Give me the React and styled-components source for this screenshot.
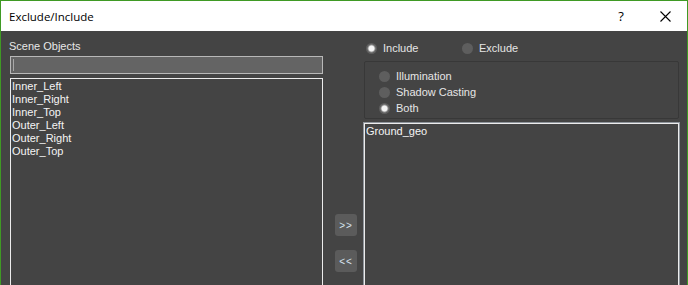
import React from "react";
import styled, { createGlobalStyle } from "styled-components";

const Global = createGlobalStyle`
  html, body { margin: 0; padding: 0; background: #444444; }
  body { font-family: "Liberation Sans", Arial, sans-serif; }
  * { box-sizing: border-box; }
`;

const Window = styled.div`
  width: 688px;
  height: 285px;
  border: 1px solid #3f9a24;
  border-bottom: none;
  background: #444444;
  display: flex;
  flex-direction: column;
  overflow: hidden;
`;

const TitleBar = styled.div`
  height: 30px;
  flex: none;
  background: #ffffff;
  display: flex;
  align-items: center;
  padding-left: 8px;
  font-family: "Open Sans", "Liberation Sans", sans-serif;
  font-size: 11.5px;
  color: #000;
`;

const Title = styled.div`
  flex: 1;
`;

const TitleButton = styled.button`
  width: 44px;
  height: 30px;
  border: none;
  background: transparent;
  display: flex;
  align-items: center;
  justify-content: center;
  padding: 0;
  font-family: "Open Sans", "Liberation Sans", sans-serif;
  font-size: 13px;
  color: #000;
`;

const Body = styled.div`
  flex: 1;
  display: flex;
  padding: 9px 7px 0 8px;
  min-height: 0;
`;

const LeftCol = styled.div`
  width: 314px;
  display: flex;
  flex-direction: column;
`;

const Label = styled.div`
  font-size: 11px;
  color: #e8e8e8;
  height: 16px;
  line-height: 12px;
`;

const SearchBox = styled.div`
  margin-left: 1px;
  height: 18px;
  border: 1px solid #b8b8b8;
  background: #646464;
  position: relative;
  &::after {
    content: "";
    position: absolute;
    left: 2px;
    top: 2px;
    width: 1px;
    height: 12px;
    background: #a8a8a8;
  }
`;

const List = styled.div`
  margin-left: ${(p) => (p.$inset ? 1 : 0)}px;
  margin-top: 4px;
  flex: 1;
  border: 1px solid #ececec;
  border-bottom: none;
  box-shadow: ${(p) => (p.$outline ? "0 0 0 1px #8f959c" : "none")};
  background: #444444;
  padding: 1px 0 0 1px;
`;

const Item = styled.div`
  font-size: 11px;
  line-height: 13px;
  color: #f4f4f4;
`;

const MidCol = styled.div`
  width: 41px;
  display: flex;
  flex-direction: column;
  align-items: flex-start;
  padding: 174px 0 0 12px;
  gap: 14px;
`;

const ArrowButton = styled.button`
  width: 22px;
  height: 22px;
  padding: 0;
  border: none;
  border-radius: 3px;
  background: #5b5b5b;
  color: #d8e4f0;
  font-family: "Liberation Sans", Arial, sans-serif;
  font-size: 10px;
  letter-spacing: 1px;
  display: flex;
  align-items: center;
  justify-content: center;
`;

const RightCol = styled.div`
  width: 315px;
  display: flex;
  flex-direction: column;
`;

const RadioRow = styled.div`
  display: flex;
  align-items: center;
  height: 14px;
  margin-top: 1px;
`;

const RadioOption = styled.label`
  display: flex;
  align-items: center;
  gap: 6px;
  width: ${(p) => p.$width || "auto"};
  padding-left: ${(p) => p.$indent || 0}px;
  height: 16px;
  font-size: 11px;
  color: #e6e6e6;
`;

const RadioDot = styled.span`
  width: 11px;
  height: 11px;
  border-radius: 50%;
  flex: none;
  background: ${(p) =>
    p.$checked
      ? "radial-gradient(circle, #f4f4f4 0 2.6px, #9a9a9a 3.4px, #5e5e5e 4.5px)"
      : "#5e5e5e"};
`;

const GroupBox = styled.div`
  margin-top: 6px;
  height: 58px;
  border: 1px solid #383838;
  border-radius: 2px;
  display: flex;
  flex-direction: column;
  padding: 6px 0 0 14px;
`;

const Dialog = () => (
  <Window>
    <TitleBar>
      <Title>Exclude/Include</Title>
      <TitleButton>?</TitleButton>
      <TitleButton>
        <svg width="11" height="11" viewBox="0 0 11 11">
          <path d="M0.5 0.5L10.5 10.5M10.5 0.5L0.5 10.5" stroke="#000" strokeWidth="1.1" />
        </svg>
      </TitleButton>
    </TitleBar>
    <Body>
      <LeftCol>
        <Label>Scene Objects</Label>
        <SearchBox />
        <List $inset>
          {["Inner_Left", "Inner_Right", "Inner_Top", "Outer_Left", "Outer_Right", "Outer_Top"].map((n) => (
            <Item key={n}>{n}</Item>
          ))}
        </List>
      </LeftCol>
      <MidCol>
        <ArrowButton>&gt;&gt;</ArrowButton>
        <ArrowButton>&lt;&lt;</ArrowButton>
      </MidCol>
      <RightCol>
        <RadioRow>
          <RadioOption $width="98px" $indent={2}>
            <RadioDot $checked />
            Include
          </RadioOption>
          <RadioOption>
            <RadioDot />
            Exclude
          </RadioOption>
        </RadioRow>
        <GroupBox>
          <RadioOption>
            <RadioDot />
            Illumination
          </RadioOption>
          <RadioOption>
            <RadioDot />
            Shadow Casting
          </RadioOption>
          <RadioOption>
            <RadioDot $checked />
            Both
          </RadioOption>
        </GroupBox>
        <List $outline>
          <Item>Ground_geo</Item>
        </List>
      </RightCol>
    </Body>
  </Window>
);

export default function App() {
  return (
    <>
      <Global />
      <Dialog />
    </>
  );
}
